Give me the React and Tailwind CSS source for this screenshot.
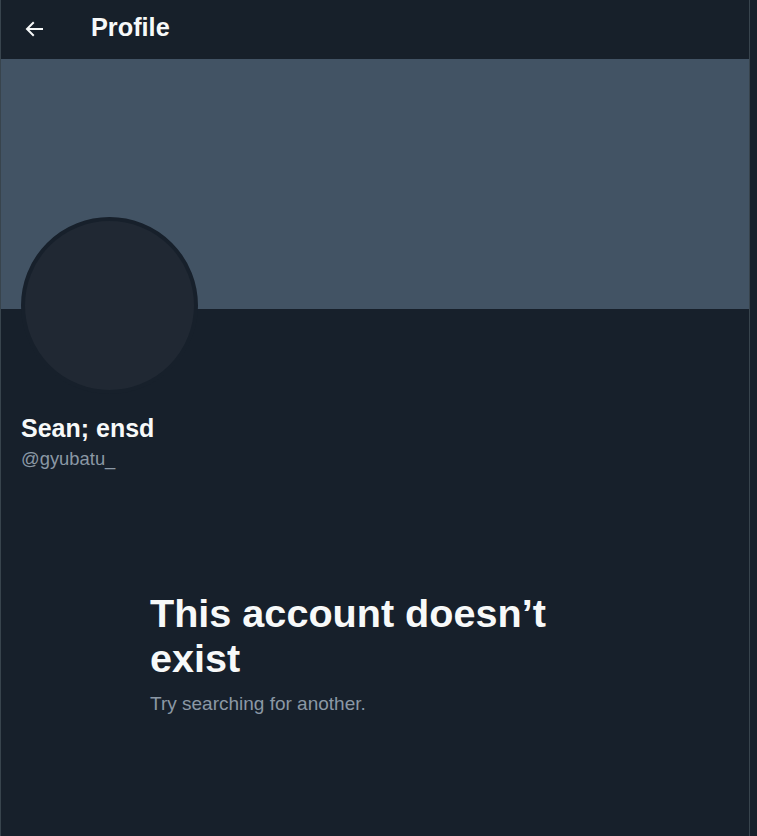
import React from 'react';

const ArrowLeft = () => (
  <svg viewBox="0 0 24 24" className="w-6 h-6 fill-[#f7f9f9]" aria-hidden="true">
    <path d="M7.414 13l5.043 5.043-1.414 1.414L3.586 12l7.457-7.457 1.414 1.414L7.414 11H21v2H7.414z" />
  </svg>
);

export default function App() {
  return (
    <div
      className="min-h-[836px] w-[757px] bg-[#17202b] text-[#f7f9f9]"
      style={{ fontFamily: '"Liberation Sans", Arial, sans-serif' }}
    >
      <div className="w-[750px] min-h-[836px] border-x border-[#38444d]">
        {/* top bar */}
        <div className="h-[59px] flex items-center pb-[6px] bg-[#17202a]">
          <button className="ml-[21px] mt-[5px] w-6 h-6 flex items-center justify-center">
            <ArrowLeft />
          </button>
          <h2 className="ml-[45px] text-[25.3px] leading-[30px] font-bold">Profile</h2>
        </div>

        {/* banner */}
        <div className="h-[250px] bg-[#425364]" />

        {/* profile info */}
        <div className="px-[20px]">
          <div className="-mt-[92px] w-[177px] h-[177px] rounded-full border-4 border-[#17202b] bg-[#202833]" />
          <div className="mt-[19px] text-[25px] leading-[30px] font-bold">Sean; ensd</div>
          <div className="mt-[3px] text-[18.4px] leading-[25px] text-[#8b98a5]">@gyubatu_</div>
        </div>

        {/* empty state */}
        <div className="mt-[120px] w-[450px] mx-auto">
          <h1 className="text-[39.6px] leading-[45px] font-bold">This account doesn’t exist</h1>
          <p className="mt-[10px] text-[19px] leading-[25px] text-[#8b98a5]">Try searching for another.</p>
        </div>
      </div>
    </div>
  );
}
